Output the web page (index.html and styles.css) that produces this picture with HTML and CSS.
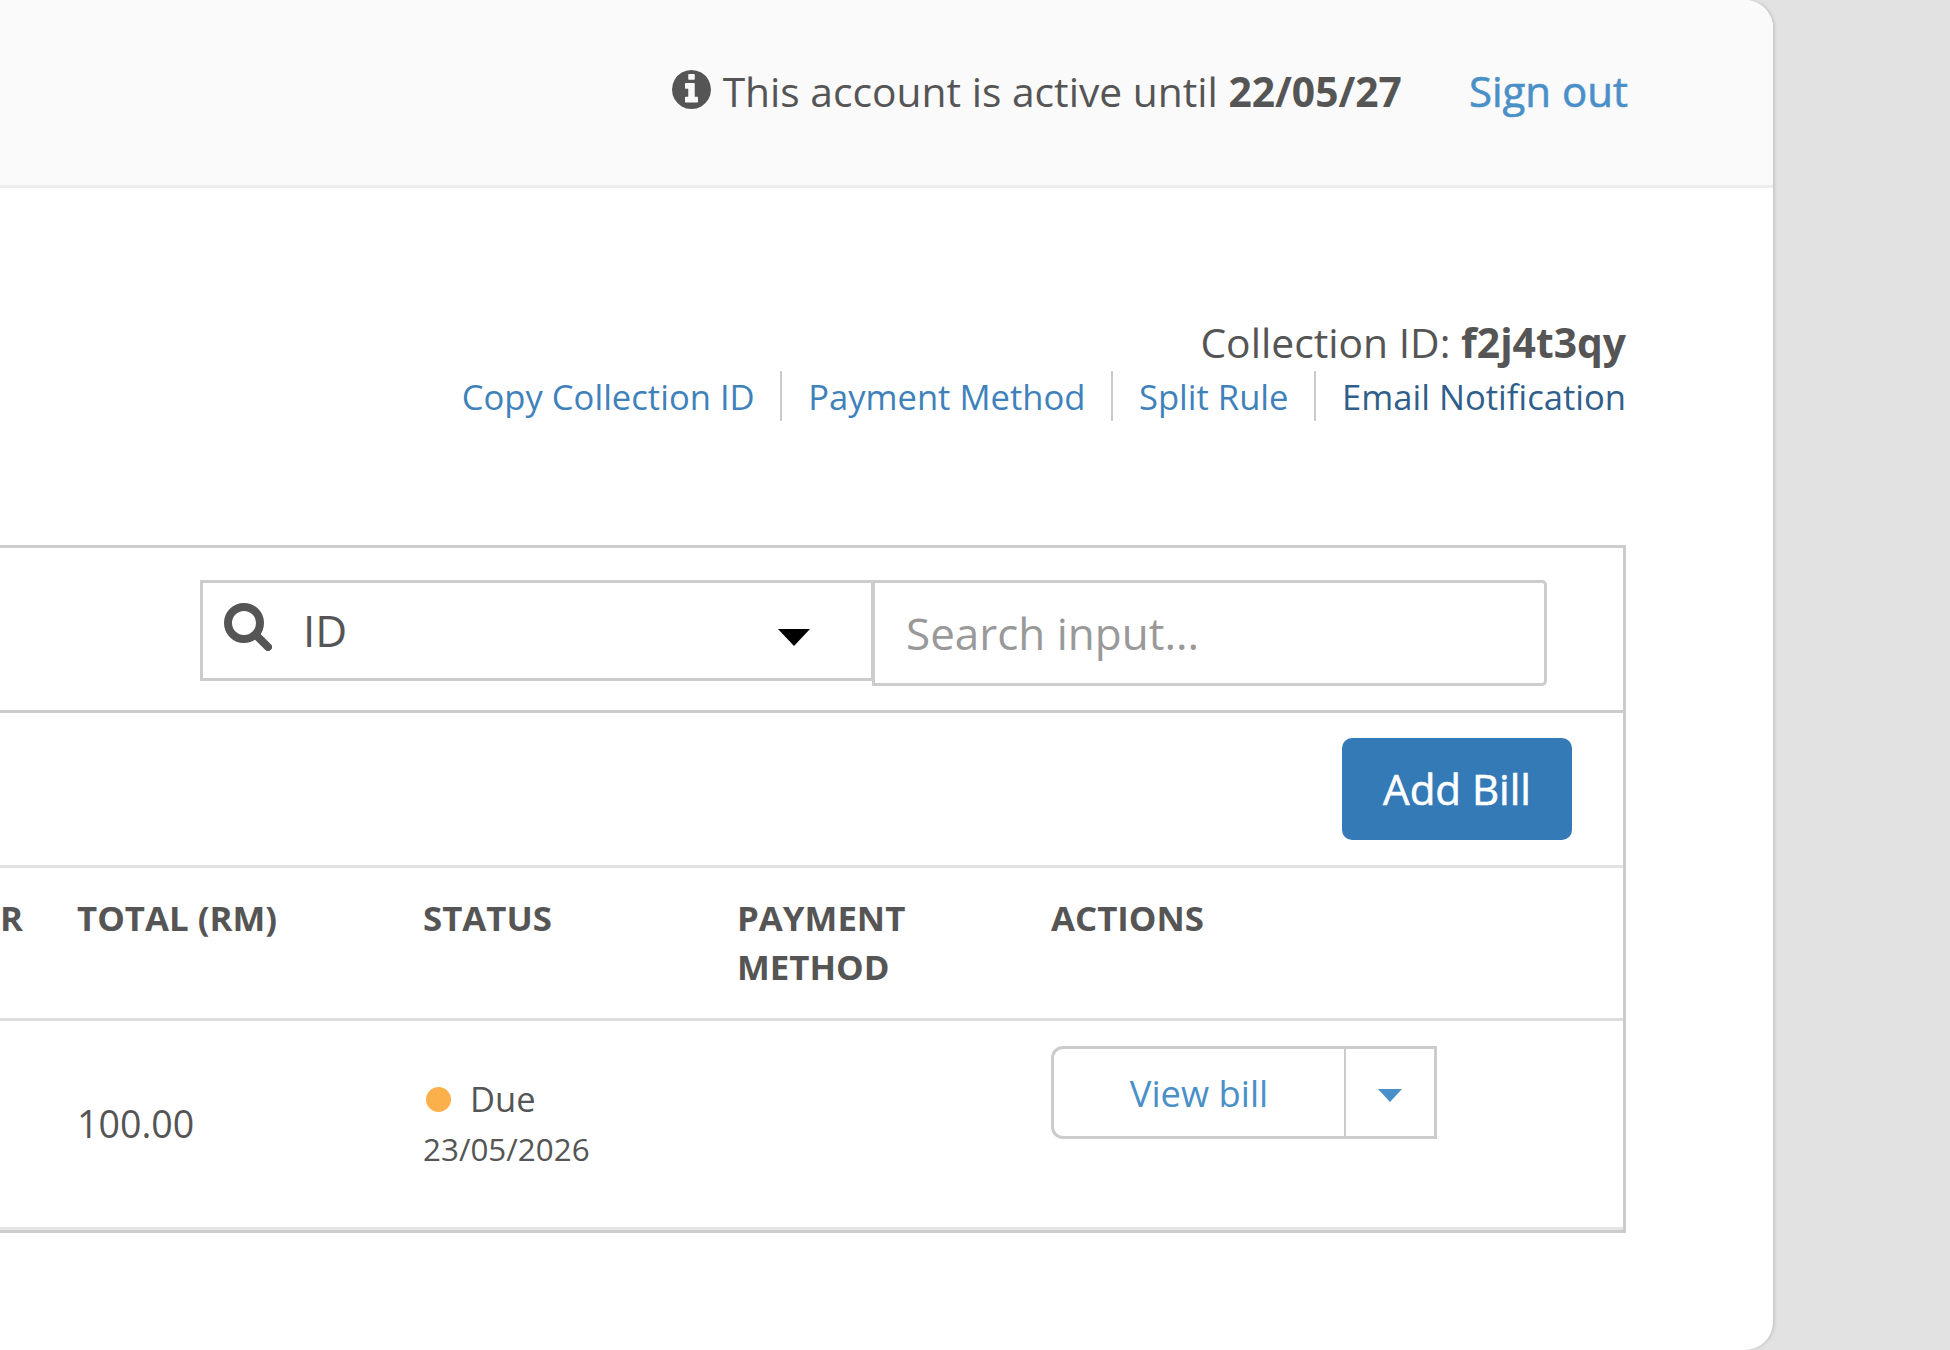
FILE: index.html
```html
<!DOCTYPE html>
<html lang="en">
<head>
<meta charset="utf-8">
<title>Collection</title>
<link rel="stylesheet" href="styles.css">
</head>
<body>
<div class="card">
  <header class="topbar">
    <svg class="info-icon" viewBox="128 128 1536 1536"><path d="M1152 1376v-160q0-14-9-23t-23-9h-96v-512q0-14-9-23t-23-9h-320q-14 0-23 9t-9 23v160q0 14 9 23t23 9h96v320h-96q-14 0-23 9t-9 23v160q0 14 9 23t23 9h448q14 0 23-9t9-23zm-128-896v-160q0-14-9-23t-23-9h-192q-14 0-23 9t-9 23v160q0 14 9 23t23 9h192q14 0 23-9t9-23zm640 416q0 209-103 385.5t-279.5 279.5-385.5 103-385.5-103-279.5-279.5-103-385.5 103-385.5 279.5-279.5 385.5-103 385.5 103 279.5 279.5 103 385.5z"/></svg>
    <span class="account">This account is active until <b>22/05/27</b></span>
    <a class="signout">Sign out</a>
  </header>
  <main class="content">
    <section class="collection">
      <div class="collection-id">Collection ID: <b>f2j4t3qy</b></div>
      <nav class="links">
        <a class="link">Copy Collection ID</a>
        <a class="link">Payment Method</a>
        <a class="link">Split Rule</a>
        <a class="link link-dark">Email Notification</a>
      </nav>
    </section>
    <section class="panel">
      <div class="search-row">
        <div class="select">
          <svg class="search-icon" viewBox="0 0 48 48"><circle cx="20" cy="20" r="16"/><line x1="32" y1="32" x2="44" y2="44"/></svg>
          <span class="select-value">ID</span>
          <svg class="select-caret" viewBox="0 0 32 17"><path d="M0 0h32L16 17z"/></svg>
        </div>
        <input class="search-input" type="text" placeholder="Search input...">
      </div>
      <div class="action-row">
        <a class="btn-primary">Add Bill</a>
      </div>
      <table class="bills">
        <colgroup>
          <col class="c0"><col class="c1"><col class="c2"><col class="c3"><col>
        </colgroup>
        <thead>
          <tr>
            <th>R</th>
            <th>TOTAL (RM)</th>
            <th>STATUS</th>
            <th>PAYMENT<br>METHOD</th>
            <th>ACTIONS</th>
          </tr>
        </thead>
        <tbody>
          <tr>
            <td></td>
            <td class="total">100.00</td>
            <td class="status">
              <div class="due"><i class="dot"></i>Due</div>
              <div class="date">23/05/2026</div>
            </td>
            <td></td>
            <td class="actions">
              <div class="btn-group">
                <a class="view">View bill</a>
                <span class="view-caret"><svg viewBox="0 0 24 13"><path d="M0 0h24L12 13z"/></svg></span>
              </div>
            </td>
          </tr>
        </tbody>
      </table>
    </section>
  </main>
</div>
</body>
</html>
```

FILE: styles.css
```css
* { box-sizing: border-box; }
html, body { margin: 0; height: 1350px; overflow: hidden; background: #e2e2e2; }
body { font-family: "Open Sans", sans-serif; color: #555; }

.card {
  width: 1773px;
  height: 1350px;
  background: #fff;
  border-radius: 0 28px 28px 0;
  box-shadow: 2px 0 3px #c9c9c9;
  overflow: hidden;
}

.topbar {
  height: 188px;
  background: #fafafa;
  border-bottom: 3px solid #eee;
  display: flex;
  align-items: center;
  justify-content: flex-end;
  padding: 0 145px 4px 0;
  font-size: 40.75px;
}
.info-icon { width: 39px; height: 39px; fill: #555; margin-right: 12px; margin-top: -2px; }
.signout { color: #4a90c8; margin-left: 67px; font-size: 42px; -webkit-text-stroke: 0.6px #4a90c8; }

.content { padding-right: 147px; }

.collection { height: 357px; padding-top: 126px; text-align: right; }
.collection-id { font-size: 40.8px; line-height: 56px; }
.links { display: flex; justify-content: flex-end; margin-top: 1px; }
.link {
  font-size: 34.6px;
  line-height: 48px;
  color: #3f82bb;
  padding: 2px 0 0 26px;
  margin-left: 25.5px;
  border-left: 2px solid #ccc;
}
.link:first-child { border-left: 0; padding-left: 0; margin-left: 0; }
.link-dark { color: #2f5f8a; }

.panel {
  border: 3px solid #ccc;
  border-left: 0;
  border-bottom: 3px solid #ccc;
}

.search-row {
  height: 165px;
  padding: 32px 0 0 200px;
  display: flex;
  align-items: flex-start;
  border-bottom: 3px solid #ccc;
}
.select {
  width: 674px;
  height: 101px;
  border: 3px solid #ccc;
  display: flex;
  align-items: center;
  padding: 0 60px 0 21px;
}
.search-icon { width: 48px; height: 48px; margin-top: -8px; fill: none; stroke: #555; stroke-width: 8; stroke-linecap: round; }
.select-value { flex: 1; font-size: 44px; margin: 0 0 2px 31px; line-height: 54px; }
.select-caret { width: 32px; height: 17px; fill: #000; margin: 14px 1px 0 0; }
.search-input {
  width: 675px;
  height: 106px;
  margin-left: -2px;
  border: 3px solid #ccc;
  border-radius: 0 5px 5px 0;
  padding: 0 31px;
  font: 44px "Open Sans", sans-serif;
  color: #555;
  outline: 0;
}
.search-input::placeholder { color: #999; opacity: 1; }

.action-row {
  height: 152px;
  padding: 25px 51px 0 0;
  display: flex;
  justify-content: flex-end;
  align-items: flex-start;
}
.btn-primary {
  width: 230px;
  height: 102px;
  padding-bottom: 2px;
  background: #337ab7;
  border-radius: 10px;
  color: #fff;
  font-size: 42px;
  -webkit-text-stroke: 0.6px #fff;
  display: flex;
  align-items: center;
  justify-content: center;
}

.bills { width: 100%; table-layout: fixed; border-collapse: collapse; }
.c0 { width: 77px; }
.c1 { width: 346px; }
.c2 { width: 314px; }
.c3 { width: 314px; }
.bills th {
  text-align: left;
  vertical-align: top;
  font-size: 34.8px;
  font-weight: 700;
  line-height: 48.5px;
  padding: 26px 0 0;
  height: 153px;
  border-top: 3px solid #e2e2e2;
  border-bottom: 3px solid #ddd;
}
.bills td { height: 209px; padding: 0; font-size: 35px; vertical-align: middle; border-bottom: 3px solid #e4e4e4; }
.bills td.total { font-size: 37.6px; padding-bottom: 2px; }
.bills td.status { vertical-align: top; padding-top: 54px; }
.due { display: flex; align-items: center; font-size: 34.5px; line-height: 48.5px; }
.dot { width: 25px; height: 25px; border-radius: 50%; background: #fbb04c; margin: 0 19px 0 3px; }
.date { font-size: 31.4px; line-height: 50px; }
.bills td.actions { vertical-align: top; padding-top: 25px; }
.btn-group {
  width: 386px;
  height: 93px;
  border: 3px solid #ccc;
  border-radius: 12px 0 0 12px;
  display: flex;
  align-items: stretch;
}
.view {
  width: 292px;
  color: #4a90c8;
  font-size: 36.3px;
  display: flex;
  align-items: center;
  justify-content: center;
  border-right: 2px solid #ccc;
}
.view-caret { flex: 1; display: flex; align-items: center; justify-content: center; padding-top: 6px; }
.view-caret svg { width: 24px; height: 13px; fill: #4a90c8; }
```
